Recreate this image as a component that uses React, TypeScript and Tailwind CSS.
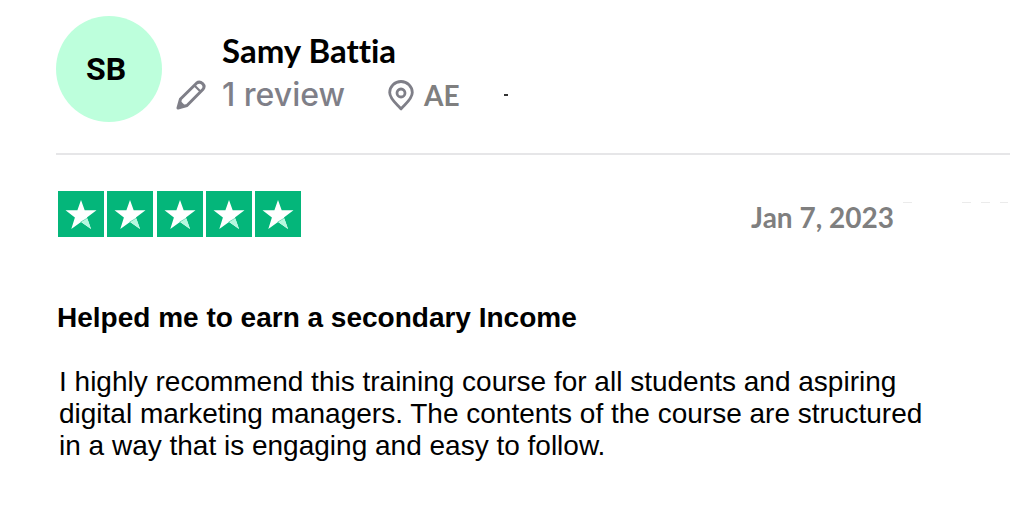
const review = {
	initials: "SB",
	name: "Samy Battia",
	count: "1 review",
	country: "AE",
	rating: 5,
	date: "Jan 7, 2023",
	title: "Helped me to earn a secondary Income",
	body: "I highly recommend this training course for all students and aspiring digital marketing managers. The contents of the course are structured in a way that is engaging and easy to follow.",
};

function PencilIcon() {
	return (
		<svg
			viewBox="0 0 30 30"
			className="h-[30px] w-[30px]"
			fill="none"
			stroke="currentColor"
			strokeWidth="3"
			strokeLinejoin="round"
			aria-hidden="true"
		>
			<path d="M2 28 4.5 19 20.5 3.2Q23.5.8 26.6 3.6 29.4 6.5 26.8 9.5L11 25.5Z" />
			<path d="m18.5 5.5 6 6" strokeWidth="2.2" />
			<path d="M2 28 4.2 20.5 9.6 26Z" fill="currentColor" stroke="none" />
		</svg>
	);
}

function PinIcon() {
	return (
		<svg
			viewBox="0 0 26 31"
			className="h-[31px] w-[26px]"
			fill="none"
			stroke="currentColor"
			strokeWidth="2.8"
			strokeLinejoin="round"
			aria-hidden="true"
		>
			<path d="M13 29C10 25 1.7 19.5 1.7 12.6a11.3 11.1 0 0 1 22.6 0C24.3 19.5 16 25 13 29Z" />
			<circle cx="13" cy="13" r="4" />
		</svg>
	);
}

function Star() {
	return (
		<svg viewBox="0 0 46 46" className="h-[46px] w-[46px]" aria-hidden="true">
			<path d="M0 0h46v46H0z" fill="#04b67a" />
			<path
				d="M23 9 26.7 19.3H38.5L28.9 26.5 33 38 23 31.1 13.3 38 16.9 26.4 7.5 19.3H19.4Z"
				fill="#fff"
			/>
			<path d="m23.5 31 6-3.2L33 38Z" fill="#b5f8df" />
			<path d="m22.5 31.2 6.8-4" stroke="#6fdcb6" strokeWidth="1" />
		</svg>
	);
}

function App() {
	return (
		<main className="bg-white pt-4 pr-3.5 pl-14 font-['Liberation_Sans',Arial,sans-serif] text-black">
			<article>
				<header className="flex gap-3.5 border-b-2 border-[#e6e6e8] pb-[31px]">
					<div className="flex h-[106px] w-[106px] shrink-0 items-center justify-center rounded-full bg-[#bdffdc] pr-1.5 font-['Roboto',sans-serif] text-[32px] font-bold">
						{review.initials}
					</div>
					<div className="pt-4">
						<h1 className="pl-[46px] font-['Lato',sans-serif] text-[33px] leading-9 font-bold [font-variant-ligatures:none]">
							{review.name}
						</h1>
						<div className="mt-[9px] flex h-9 items-center text-[#7f7f88]">
							<PencilIcon />
							<span className="ml-4 font-['Inter',sans-serif] text-[32px] leading-9 font-medium">
								{review.count}
							</span>
							<span className="ml-[43px] flex items-center gap-2.5 font-['Lato',sans-serif] text-[28px] leading-9 font-bold">
								<PinIcon />
								<span className="text-[#7f7f7f]">{review.country}</span>
							</span>
							<span className="ml-11 h-0.5 w-1 bg-[#333]" />
						</div>
					</div>
				</header>

				<div className="flex items-start justify-between pt-9">
					<div
						className="flex w-[245px] justify-between pl-0.5"
						role="img"
						aria-label={`Rated ${review.rating} out of 5 stars`}
					>
						{Array.from({ length: review.rating }, (_, i) => (
							<Star key={i} />
						))}
					</div>
					<div className="flex items-start pt-2">
						<time
							dateTime="2023-01-07"
							className="font-['Lato',sans-serif] text-[28px] leading-9 font-bold text-[#7f7f7f]"
						>
							{review.date}
						</time>
						<svg
							viewBox="0 0 116 8"
							className="h-2 w-[116px]"
							stroke="#ebebeb"
							aria-hidden="true"
						>
							<path d="M9 3.5h9M68 3.5h9M87 3.5h9M106 3.5h8" />
						</svg>
					</div>
				</div>

				<h2 className="mt-[65px] pl-px text-[28px] leading-8 font-bold">
					{review.title}
				</h2>
				<p className="mt-8 max-w-[880px] pl-[3px] text-[28px] leading-8">
					{review.body}
				</p>
			</article>
		</main>
	);
}

export default App;
